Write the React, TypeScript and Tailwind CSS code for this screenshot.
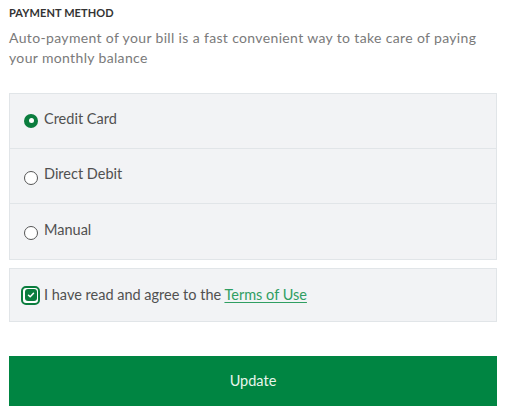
import React from "react";

function Radio({ checked }: { checked: boolean }) {
  if (checked) {
    return (
      <span className="mt-[3px] flex h-[14px] w-[14px] shrink-0 items-center justify-center rounded-full bg-[#0b7d3e]">
        <span className="h-[5px] w-[5px] rounded-full bg-white" />
      </span>
    );
  }
  return <span className="mt-[7px] h-[14px] w-[14px] shrink-0 rounded-full border border-[#555] bg-white" />;
}

function Row({ label, checked, last }: { label: string; checked: boolean; last?: boolean }) {
  return (
    <div
      className={`flex h-[55px] items-center gap-[6px] pb-[4px] pl-[14px] ${last ? "" : "border-b border-[#e1e5e8]"}`}
    >
      <Radio checked={checked} />
      <span className="text-[14.5px] text-[#505050]">{label}</span>
    </div>
  );
}

export default function App() {
  return (
    <div
      className="w-[511px] bg-white px-[9px] pt-[5px]"
      style={{ fontFamily: "Lato, 'Open Sans', sans-serif" }}
    >
      <div className="w-[488px]">
        <div className="text-[11px] font-bold leading-[16px] tracking-[0.1px] text-[#333]">PAYMENT METHOD</div>
        <p className="mt-[7px] text-[14px] leading-[20px] tracking-[0.35px] text-[#7a7a7a]">
          Auto-payment of your bill is a fast convenient way to take care of paying your monthly balance
        </p>
        <div className="mt-[25px] border border-[#e1e5e8] bg-[#f2f3f5]">
          <Row label="Credit Card" checked />
          <Row label="Direct Debit" checked={false} />
          <Row label="Manual" checked={false} last />
        </div>
        <div className="mt-[8px] flex h-[54px] items-center gap-[4px] border border-[#e1e5e8] bg-[#f2f3f5] pl-[11px]">
          <span className="flex h-[19px] w-[19px] shrink-0 items-center justify-center rounded-[5px] border-2 border-[#0b7d3e] bg-white">
            <span className="flex h-[12px] w-[12px] items-center justify-center rounded-[3px] bg-[#0b7d3e]">
              <svg width="8" height="8" viewBox="0 0 8 8">
                <path d="M1.5 4.2 L3.2 5.8 L6.5 2.3" stroke="white" strokeWidth="1.5" fill="none" strokeLinecap="round" strokeLinejoin="round" />
              </svg>
            </span>
          </span>
          <span className="text-[14.5px] text-[#505050]">
            I have read and agree to the{" "}
            <a className="text-[#2f9e62] underline underline-offset-2">Terms of Use</a>
          </span>
        </div>
        <button className="mt-[34px] flex h-[50px] w-full items-center justify-center bg-[#008542] text-[14.5px] text-[#e8f5ec]">
          Update
        </button>
      </div>
      <div className="h-[7px]" />
    </div>
  );
}
